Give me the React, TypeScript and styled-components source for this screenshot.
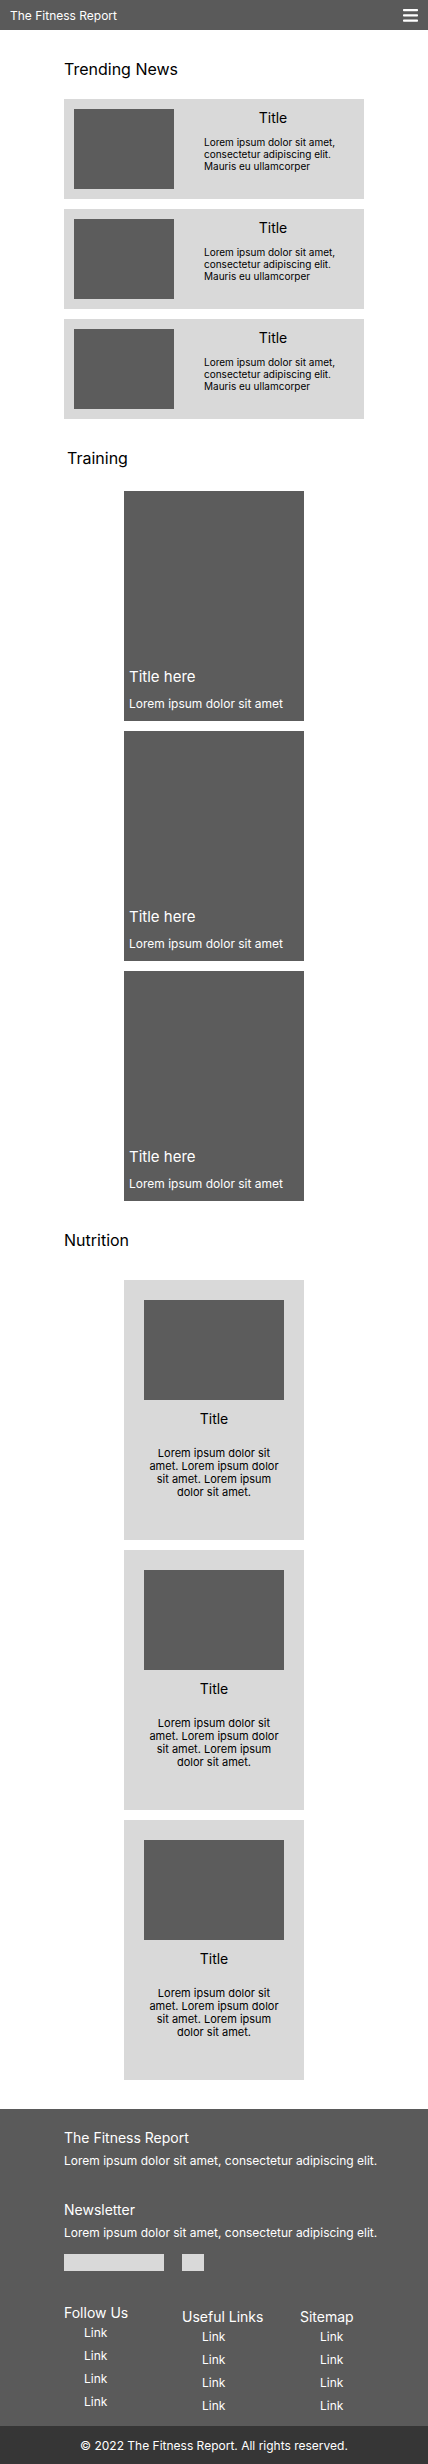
import React from 'react';
import styled, { createGlobalStyle } from 'styled-components';

const GlobalStyle = createGlobalStyle`
  *, *::before, *::after { box-sizing: border-box; }
  body {
    margin: 0;
    background: #ffffff;
    color: #000000;
    font-family: Inter, "Liberation Sans", sans-serif;
    font-size: 12px;
    line-height: 15px;
  }
  h1, h2, h3, p, ul { margin: 0; padding: 0; font-weight: 400; }
  ul { list-style: none; }
`;

const Header = styled.header`
  display: flex;
  align-items: center;
  justify-content: space-between;
  height: 30px;
  padding: 0 10px;
  background: #5a5a5a;
  color: #ffffff;
`;

const Brand = styled.h1`
  font-size: 12px;
  line-height: 15px;
`;

const MenuButton = styled.button`
  display: flex;
  padding: 0;
  border: 0;
  background: none;
  color: inherit;
  cursor: pointer;
`;

const Section = styled.section`
  padding: 30px 64px 0;
`;

const SectionTitle = styled.h2<{ $inset?: number; $space: number }>`
  padding-left: ${({ $inset = 0 }) => $inset}px;
  margin-bottom: ${({ $space }) => $space}px;
  font-size: 16px;
  line-height: 19px;
`;

const Stack = styled.div`
  display: flex;
  flex-direction: column;
  align-items: center;
  gap: 10px;
`;

const Picture = styled.div<{ $width: number; $height: number }>`
  flex: none;
  width: ${({ $width }) => $width}px;
  height: ${({ $height }) => $height}px;
  background: #5c5c5c;
`;

const CardTitle = styled.h3`
  font-size: 14px;
  line-height: 17px;
`;

const NewsCard = styled.article`
  display: flex;
  gap: 30px;
  width: 100%;
  padding: 10px 22px 10px 10px;
  background: #d9d9d9;
`;

const NewsBody = styled.div`
  flex: 1;
  display: flex;
  flex-direction: column;
  gap: 10px;
  text-align: center;
`;

const NewsText = styled.p`
  font-size: 10px;
  line-height: 12px;
  text-align: left;
`;

const TrainingCard = styled.article`
  display: flex;
  flex-direction: column;
  justify-content: flex-end;
  gap: 10px;
  width: 180px;
  min-height: 230px;
  padding: 10px 5px;
  background: #5c5c5c;
  color: #ffffff;
`;

const TrainingTitle = styled.h3`
  font-size: 15px;
  line-height: 18px;
`;

const NutritionCard = styled.article`
  display: flex;
  flex-direction: column;
  align-items: center;
  gap: 10px;
  width: 180px;
  min-height: 260px;
  padding: 20px;
  background: #d9d9d9;
  text-align: center;
`;

const NutritionText = styled.p`
  padding-top: 10px;
  font-size: 11px;
  line-height: 13px;
`;

const Footer = styled.footer`
  margin-top: 29px;
  background: #5a5a5a;
  color: #ffffff;
`;

const FooterContent = styled.div`
  padding: 20px 10px 13px 64px;
`;

const FooterBlock = styled.section`
  display: flex;
  flex-direction: column;
  gap: 7px;
  margin-bottom: 33px;
`;

const Form = styled.form`
  display: flex;
  gap: 18px;
  margin-top: 7px;
`;

const EmailInput = styled.input`
  width: 100px;
  height: 17px;
  padding: 0 4px;
  border: 0;
  border-radius: 0;
  background: #d9d9d9;
  font: inherit;
`;

const SubmitButton = styled.button`
  width: 22px;
  height: 17px;
  padding: 0;
  border: 0;
  background: #d9d9d9;
  cursor: pointer;
`;

const LinkColumns = styled.div`
  display: grid;
  grid-template-columns: repeat(3, 1fr);
`;

const LinkColumn = styled.nav<{ $drop: number }>`
  padding-top: ${({ $drop }) => $drop}px;
  white-space: nowrap;
`;

const LinkList = styled.ul`
  display: flex;
  flex-direction: column;
  align-items: flex-start;
  gap: 8px;
  padding: 4px 0 0 20px;
`;

const FooterLink = styled.a`
  display: block;
  color: inherit;
  text-decoration: none;
`;

const Copyright = styled.p`
  padding: 12px 10px 11px;
  background: #363636;
  text-align: center;
`;

const items = [1, 2, 3];

const columns = [
  { title: 'Follow Us', drop: 0 },
  { title: 'Useful Links', drop: 4 },
  { title: 'Sitemap', drop: 4 },
];

export default function App() {
  return (
    <>
      <GlobalStyle />
      <Header>
        <Brand>The Fitness Report</Brand>
        <MenuButton type="button" aria-label="Menu">
          <svg width="15" height="14" viewBox="0 0 15 14" fill="currentColor" aria-hidden="true">
            <rect x="0" y="1" width="15" height="2.2" rx="0.8" />
            <rect x="0" y="6.3" width="15" height="2.2" rx="0.8" />
            <rect x="0" y="11.6" width="15" height="2.2" rx="0.8" />
          </svg>
        </MenuButton>
      </Header>

      <main>
        <Section>
          <SectionTitle $space={20}>Trending News</SectionTitle>
          <Stack>
            {items.map((item) => (
              <NewsCard key={item}>
                <Picture $width={100} $height={80} />
                <NewsBody>
                  <CardTitle>Title</CardTitle>
                  <NewsText>Lorem ipsum dolor sit amet, consectetur adipiscing elit. Mauris eu ullamcorper</NewsText>
                </NewsBody>
              </NewsCard>
            ))}
          </Stack>
        </Section>

        <Section>
          <SectionTitle $inset={3} $space={23}>Training</SectionTitle>
          <Stack>
            {items.map((item) => (
              <TrainingCard key={item}>
                <TrainingTitle>Title here</TrainingTitle>
                <p>Lorem ipsum dolor sit amet</p>
              </TrainingCard>
            ))}
          </Stack>
        </Section>

        <Section>
          <SectionTitle $space={30}>Nutrition</SectionTitle>
          <Stack>
            {items.map((item) => (
              <NutritionCard key={item}>
                <Picture $width={140} $height={100} />
                <CardTitle>Title</CardTitle>
                <NutritionText>Lorem ipsum dolor sit amet. Lorem ipsum dolor sit amet. Lorem ipsum dolor sit amet.</NutritionText>
              </NutritionCard>
            ))}
          </Stack>
        </Section>
      </main>

      <Footer>
        <FooterContent>
          <FooterBlock>
            <CardTitle as="h2">The Fitness Report</CardTitle>
            <p>Lorem ipsum dolor sit amet, consectetur adipiscing elit.</p>
          </FooterBlock>
          <FooterBlock>
            <CardTitle as="h2">Newsletter</CardTitle>
            <p>Lorem ipsum dolor sit amet, consectetur adipiscing elit.</p>
            <Form onSubmit={(event) => event.preventDefault()}>
              <EmailInput type="email" aria-label="Email address" />
              <SubmitButton type="submit" aria-label="Subscribe" />
            </Form>
          </FooterBlock>
          <LinkColumns>
            {columns.map(({ title, drop }) => (
              <LinkColumn key={title} $drop={drop} aria-label={title}>
                <CardTitle as="h2">{title}</CardTitle>
                <LinkList>
                  {[1, 2, 3, 4].map((link) => (
                    <li key={link}>
                      <FooterLink href="#">Link</FooterLink>
                    </li>
                  ))}
                </LinkList>
              </LinkColumn>
            ))}
          </LinkColumns>
        </FooterContent>
        <Copyright>© 2022 The Fitness Report. All rights reserved.</Copyright>
      </Footer>
    </>
  );
}
